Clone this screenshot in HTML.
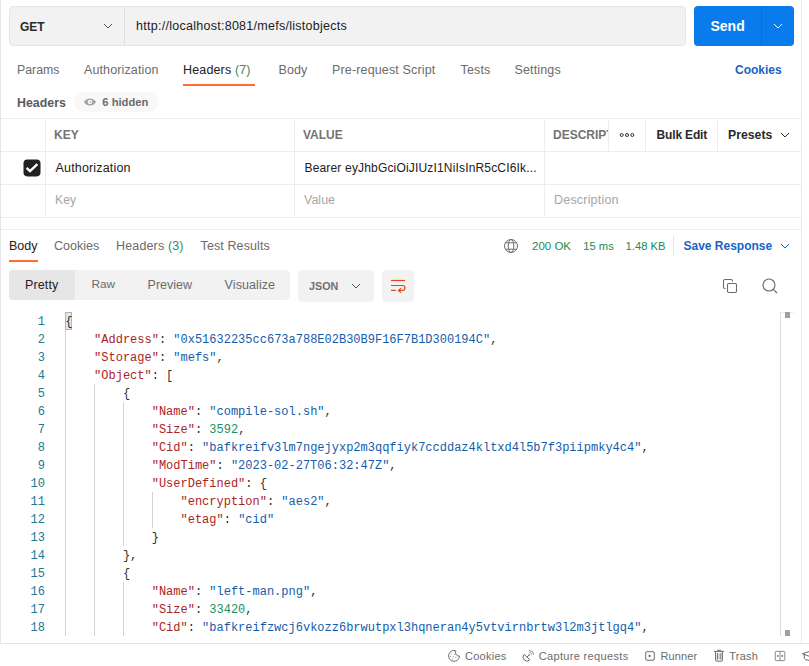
<!DOCTYPE html>
<html><head><meta charset="utf-8">
<style>
*{box-sizing:border-box;margin:0;padding:0}
html,body{width:809px;height:666px;overflow:hidden;background:#fff}
body{font-family:"Liberation Sans",sans-serif;font-size:12px;color:#212121;position:relative}
.abs{position:absolute}
.t{position:absolute;white-space:nowrap;line-height:1}
.urlbar{left:9px;top:6px;width:677px;height:40px;background:#f2f2f2;border:1px solid #e6e6e6;border-radius:4px}
.urlsep{left:124px;top:7px;width:1px;height:38px;background:#e0e0e0}
.send{left:694px;top:6px;width:100px;height:40px;background:#097bed;border-radius:4px}
.sendsep{left:761px;top:6px;width:1px;height:40px;background:#0a6dd2}
.hl{background:#ededed;height:1px;left:0;width:801px}
.vl{background:#ededed;width:1px}
.code{font-family:"Liberation Mono",monospace;font-size:12px;position:absolute;white-space:pre;line-height:18px}
.k{color:#ab2424}.s{color:#145dab}.n{color:#1a8f62}.p{color:#2e2e2e}
.ln{position:absolute;left:0;width:45px;text-align:right;font-family:"Liberation Mono",monospace;font-size:12px;color:#237893;line-height:18px}
.guide{position:absolute;width:1px;background:#d3d3d3}
</style></head><body>

<!-- URL bar -->
<div class="abs urlbar"></div>
<div class="abs urlsep"></div>
<div class="t" style="left:20px;top:21px;font-weight:bold;font-size:12px;color:#2a2a2a">GET</div>
<svg class="abs" style="left:103px;top:23px" width="10" height="6" viewBox="0 0 10 6"><path d="M1 1 L5 5 L9 1" fill="none" stroke="#555" stroke-width="1"/></svg>
<div class="t" style="left:136px;top:19.6px;font-size:12.5px;letter-spacing:0.27px;color:#212121">http://localhost:8081/mefs/listobjects</div>
<div class="abs send"></div>
<div class="abs sendsep"></div>
<div class="t" style="left:710.5px;top:19.4px;font-weight:bold;font-size:14px;color:#fff">Send</div>
<svg class="abs" style="left:773px;top:23px" width="10" height="6" viewBox="0 0 10 6"><path d="M1 1 L5 5 L9 1" fill="none" stroke="#fff" stroke-width="1"/></svg>

<!-- request tabs -->
<div class="t" style="left:17px;top:64px;font-size:12.3px;color:#6b6b6b">Params</div>
<div class="t" style="left:84px;top:64px;font-size:12.5px;letter-spacing:0.12px;color:#6b6b6b">Authorization</div>
<div class="t" style="left:183px;top:64px;font-size:12.5px;letter-spacing:0.15px;color:#212121">Headers <span style="color:#3a8a62">(7)</span></div>
<div class="abs" style="left:183px;top:84px;width:72px;height:2px;background:#ff6c37"></div>
<div class="t" style="left:278.5px;top:64px;font-size:12.5px;letter-spacing:0.1px;color:#6b6b6b">Body</div>
<div class="t" style="left:332px;top:64px;font-size:12.5px;letter-spacing:0.15px;color:#6b6b6b">Pre-request Script</div>
<div class="t" style="left:460.5px;top:64px;font-size:12.5px;letter-spacing:0.15px;color:#6b6b6b">Tests</div>
<div class="t" style="left:514.5px;top:64px;font-size:12.5px;letter-spacing:0.15px;color:#6b6b6b">Settings</div>
<div class="t" style="left:735px;top:64px;font-size:12px;font-weight:bold;color:#1a63c6">Cookies</div>

<!-- Headers label -->
<div class="t" style="left:17px;top:97px;font-size:12.4px;font-weight:bold;color:#5a5a5a">Headers</div>
<div class="abs" style="left:74px;top:92px;width:85px;height:20px;border-radius:10px;background:#f8f8f8"></div>
<svg class="abs" style="left:84px;top:98.2px" width="12" height="8" viewBox="0 0 12 8" overflow="visible"><path d="M0 4 C2.4 -0.7 9.6 -0.7 12 4 C9.6 8.7 2.4 8.7 0 4 Z" fill="#a3a3a3"/><circle cx="6" cy="4" r="2.3" fill="#f7f7f7"/><circle cx="6.2" cy="4" r="0.8" fill="#a3a3a3"/></svg>
<div class="t" style="left:102.3px;top:97.3px;font-size:11.2px;font-weight:bold;color:#6b6b6b">6 hidden</div>

<!-- table -->
<div class="abs hl" style="top:118px"></div>
<div class="abs hl" style="top:151px"></div>
<div class="abs hl" style="top:184px"></div>
<div class="abs hl" style="top:217px"></div>
<div class="abs vl" style="left:45px;top:118px;height:100px"></div>
<div class="abs vl" style="left:294px;top:118px;height:100px"></div>
<div class="abs vl" style="left:544px;top:118px;height:100px"></div>
<div class="abs vl" style="left:608px;top:118px;height:33px"></div>
<div class="abs vl" style="left:645px;top:118px;height:33px"></div>
<div class="abs vl" style="left:717px;top:118px;height:33px"></div>
<div class="t" style="left:54px;top:129px;font-size:12px;font-weight:bold;color:#747474">KEY</div>
<div class="t" style="left:303px;top:129px;font-size:12px;font-weight:bold;color:#747474">VALUE</div>
<div class="abs" style="left:553px;top:119px;width:55px;height:32px;overflow:hidden"><div class="t" style="left:0;top:10px;font-size:12px;font-weight:bold;color:#747474">DESCRIPTION</div></div>
<svg class="abs" style="left:618px;top:132px" width="18" height="6" viewBox="0 0 18 6"><g fill="none" stroke="#333" stroke-width="1"><circle cx="3.7" cy="3" r="1.5"/><circle cx="9" cy="3" r="1.5"/><circle cx="14.3" cy="3" r="1.5"/></g></svg>
<div class="t" style="left:656.5px;top:129px;font-size:12px;letter-spacing:-0.15px;font-weight:bold;color:#2a2a2a">Bulk Edit</div>
<div class="t" style="left:728px;top:129px;font-size:12.25px;font-weight:bold;color:#2a2a2a">Presets</div>
<svg class="abs" style="left:779.5px;top:132px" width="10" height="6" viewBox="0 0 10 6"><path d="M1 1 L5 5 L9 1" fill="none" stroke="#333" stroke-width="1"/></svg>

<svg class="abs" style="left:20px;top:156px" width="24" height="24" viewBox="0 0 24 24"><rect x="3.5" y="3.4" width="17" height="17" rx="3.8" fill="#212121"/><path d="M6.6 11.9 L10 15.1 L17.4 8.1" fill="none" stroke="#fff" stroke-width="2.4"/></svg>
<div class="t" style="left:55.5px;top:162px;font-size:12.5px;letter-spacing:0.17px;color:#212121">Authorization</div>
<div class="t" style="left:304.5px;top:162px;font-size:12px;letter-spacing:0.17px;color:#212121">Bearer eyJhbGciOiJIUzI1NiIsInR5cCI6Ik...</div>
<div class="t" style="left:55px;top:194px;font-size:12.2px;color:#a6a6a6">Key</div>
<div class="t" style="left:304px;top:194px;font-size:12.5px;color:#a6a6a6">Value</div>
<div class="t" style="left:554px;top:194px;font-size:12.5px;letter-spacing:0.2px;color:#a6a6a6">Description</div>

<div class="abs hl" style="top:229px"></div>

<!-- response tabs -->
<div class="t" style="left:9px;top:240px;font-size:12.5px;color:#212121">Body</div>
<div class="abs" style="left:9px;top:260px;width:29px;height:2px;background:#ff6c37"></div>
<div class="t" style="left:54px;top:240px;font-size:12.5px;color:#6b6b6b">Cookies</div>
<div class="t" style="left:116px;top:240px;font-size:12.5px;letter-spacing:0.15px;color:#6b6b6b">Headers <span style="color:#3a8a62">(3)</span></div>
<div class="t" style="left:200.6px;top:240px;font-size:12.5px;letter-spacing:0.1px;color:#6b6b6b">Test Results</div>

<svg class="abs" style="left:503px;top:238px" width="16" height="16" viewBox="0 0 16 16"><g fill="none" stroke="#6b6b6b" stroke-width="1"><circle cx="8" cy="8" r="6.5"/><ellipse cx="8" cy="8" rx="2.8" ry="6.5"/><path d="M2.5 4.8 H13.5 M2.5 11.2 H13.5"/></g></svg>
<div class="t" style="left:532px;top:240.5px;font-size:11.5px;color:#238a50">200 OK</div>
<div class="t" style="left:583.3px;top:240.5px;font-size:11.2px;color:#238a50">15 ms</div>
<div class="t" style="left:625.6px;top:240.5px;font-size:11.2px;color:#238a50">1.48 KB</div>
<div class="abs" style="left:673px;top:236px;width:1px;height:20px;background:#e6e6e6"></div>
<div class="t" style="left:683.5px;top:240px;font-size:12px;font-weight:bold;color:#1a63c6">Save Response</div>
<svg class="abs" style="left:779.7px;top:243px" width="10" height="6" viewBox="0 0 10 6"><path d="M1 1 L5 5 L9 1" fill="none" stroke="#1a63c6" stroke-width="1"/></svg>

<!-- view mode -->
<div class="abs" style="left:9px;top:270px;width:281px;height:30px;background:#f2f2f2;border-radius:4px"></div>
<div class="abs" style="left:9px;top:270px;width:66px;height:30px;background:#e6e6e6;border-radius:4px 0 0 4px"></div>
<div class="t" style="left:25px;top:279px;font-size:12.5px;letter-spacing:0.12px;color:#212121">Pretty</div>
<div class="t" style="left:91.5px;top:279px;font-size:11.8px;color:#6b6b6b">Raw</div>
<div class="t" style="left:147.6px;top:279px;font-size:12.5px;color:#6b6b6b">Preview</div>
<div class="t" style="left:224.6px;top:279px;font-size:12.5px;letter-spacing:0.08px;color:#6b6b6b">Visualize</div>
<div class="abs" style="left:298px;top:270px;width:76px;height:32px;background:#f2f2f2;border-radius:4px"></div>
<div class="t" style="left:309px;top:280.6px;font-size:10.8px;font-weight:bold;color:#707070">JSON</div>
<svg class="abs" style="left:351px;top:283px" width="10" height="6" viewBox="0 0 10 6"><path d="M1 1 L5 5 L9 1" fill="none" stroke="#555" stroke-width="1"/></svg>
<div class="abs" style="left:382px;top:270px;width:32px;height:32px;background:#f2f2f2;border-radius:4px"></div>
<svg class="abs" style="left:389px;top:279px" width="18" height="14" viewBox="0 0 18 14"><g fill="none" stroke="#dc4a1c" stroke-width="1.2"><path d="M2 1.5 H16"/><path d="M2 6.5 H13.5 A2.45 2.45 0 0 1 13.5 11.4 H9.6"/><path d="M12 9.2 L9.5 11.4 L12 13.7"/><path d="M2 11.4 H7"/></g></svg>

<svg class="abs" style="left:722px;top:278px" width="16" height="16" viewBox="0 0 16 16"><g fill="none" stroke="#6b6b6b" stroke-width="1.1"><rect x="5.5" y="5.5" width="9" height="9" rx="1.2"/><path d="M3.5 10.5 H3 A1.5 1.5 0 0 1 1.5 9 V3 A1.5 1.5 0 0 1 3 1.5 H9 A1.5 1.5 0 0 1 10.5 3 V3.5"/></g></svg>
<svg class="abs" style="left:761px;top:277px" width="18" height="18" viewBox="0 0 18 18"><g fill="none" stroke="#6b6b6b" stroke-width="1.1"><circle cx="8" cy="8" r="6"/><path d="M12.3 12.3 L16 16"/></g></svg>

<!-- code -->
<div class="abs" style="left:65px;top:312px;width:7px;height:18px;background:#e6e6e2;border:1px solid #b4b4b4"></div>
<div id="codewrap" class="abs" style="left:0;top:313px;width:780px;height:323px;overflow:hidden">
<div class="ln" style="top:0px">1</div>
<div class="code" style="left:65.3px;top:0px"><span class="p">{</span></div>
<div class="ln" style="top:18px">2</div>
<div class="code" style="left:94.1px;top:18px"><span class="k">"Address"</span><span class="p">: </span><span class="s">"0x51632235cc673a788E02B30B9F16F7B1D300194C"</span><span class="p">,</span></div>
<div class="ln" style="top:36px">3</div>
<div class="code" style="left:94.1px;top:36px"><span class="k">"Storage"</span><span class="p">: </span><span class="s">"mefs"</span><span class="p">,</span></div>
<div class="ln" style="top:54px">4</div>
<div class="code" style="left:94.1px;top:54px"><span class="k">"Object"</span><span class="p">: [</span></div>
<div class="ln" style="top:72px">5</div>
<div class="code" style="left:122.9px;top:72px"><span class="p">{</span></div>
<div class="ln" style="top:90px">6</div>
<div class="code" style="left:151.7px;top:90px"><span class="k">"Name"</span><span class="p">: </span><span class="s">"compile-sol.sh"</span><span class="p">,</span></div>
<div class="ln" style="top:108px">7</div>
<div class="code" style="left:151.7px;top:108px"><span class="k">"Size"</span><span class="p">: </span><span class="n">3592</span><span class="p">,</span></div>
<div class="ln" style="top:126px">8</div>
<div class="code" style="left:151.7px;top:126px"><span class="k">"Cid"</span><span class="p">: </span><span class="s">"bafkreifv3lm7ngejyxp2m3qqfiyk7ccddaz4kltxd4l5b7f3piipmky4c4"</span><span class="p">,</span></div>
<div class="ln" style="top:144px">9</div>
<div class="code" style="left:151.7px;top:144px"><span class="k">"ModTime"</span><span class="p">: </span><span class="s">"2023-02-27T06:32:47Z"</span><span class="p">,</span></div>
<div class="ln" style="top:162px">10</div>
<div class="code" style="left:151.7px;top:162px"><span class="k">"UserDefined"</span><span class="p">: {</span></div>
<div class="ln" style="top:180px">11</div>
<div class="code" style="left:180.5px;top:180px"><span class="k">"encryption"</span><span class="p">: </span><span class="s">"aes2"</span><span class="p">,</span></div>
<div class="ln" style="top:198px">12</div>
<div class="code" style="left:180.5px;top:198px"><span class="k">"etag"</span><span class="p">: </span><span class="s">"cid"</span></div>
<div class="ln" style="top:216px">13</div>
<div class="code" style="left:151.7px;top:216px"><span class="p">}</span></div>
<div class="ln" style="top:234px">14</div>
<div class="code" style="left:122.9px;top:234px"><span class="p">},</span></div>
<div class="ln" style="top:252px">15</div>
<div class="code" style="left:122.9px;top:252px"><span class="p">{</span></div>
<div class="ln" style="top:270px">16</div>
<div class="code" style="left:151.7px;top:270px"><span class="k">"Name"</span><span class="p">: </span><span class="s">"left-man.png"</span><span class="p">,</span></div>
<div class="ln" style="top:288px">17</div>
<div class="code" style="left:151.7px;top:288px"><span class="k">"Size"</span><span class="p">: </span><span class="n">33420</span><span class="p">,</span></div>
<div class="ln" style="top:306px">18</div>
<div class="code" style="left:151.7px;top:306px"><span class="k">"Cid"</span><span class="p">: </span><span class="s">"bafkreifzwcj6vkozz6brwutpxl3hqneran4y5vtvirnbrtw3l2m3jtlgq4"</span><span class="p">,</span></div>
<div class="guide" style="left:65px;top:17px;height:306px"></div>
<div class="guide" style="left:94px;top:71px;height:252px"></div>
<div class="guide" style="left:123px;top:89px;height:144px"></div>
<div class="guide" style="left:123px;top:269px;height:54px"></div>
<div class="guide" style="left:151.5px;top:179px;height:36px"></div>
</div>

<!-- scrollbar -->
<div class="abs" style="left:780px;top:312px;width:14px;height:1px;background:#efefef"></div>
<div class="abs" style="left:780px;top:312px;width:1px;height:324px;background:#dcdcdc"></div>
<div class="abs" style="left:785px;top:312px;width:5px;height:6px;background:#a0a0a0"></div>
<div class="abs" style="left:785px;top:630px;width:5px;height:6px;background:#a0a0a0"></div>

<!-- status bar -->
<div class="abs hl" style="top:643px;width:809px;background:#e6e6e6"></div>
<div class="abs" style="left:801px;top:0;width:1px;height:643px;background:#ebebeb"></div>
<div class="abs" style="left:0;top:0;width:1px;height:643px;background:#e6e6e6"></div>
<div class="t" style="left:465px;top:650.7px;font-size:11px;letter-spacing:0.27px;color:#6b6b6b">Cookies</div>
<div class="t" style="left:538.7px;top:650.7px;font-size:11px;letter-spacing:0.34px;color:#6b6b6b">Capture requests</div>
<div class="t" style="left:660.5px;top:650.7px;font-size:11px;letter-spacing:0.12px;color:#6b6b6b">Runner</div>
<div class="t" style="left:729.3px;top:650.7px;font-size:11px;letter-spacing:0.22px;color:#6b6b6b">Trash</div>

<!-- status icons -->
<svg class="abs" style="left:448px;top:650px" width="12" height="12" viewBox="0 0 12 12"><path d="M7.8 0.8 A5.4 5.4 0 1 0 11.4 6 A3.6 3.6 0 0 1 7.8 0.8 Z" fill="none" stroke="#6b6b6b" stroke-width="1"/><g fill="#8a8a8a"><circle cx="3.6" cy="4" r="0.55"/><circle cx="5.2" cy="6.6" r="0.55"/><circle cx="6.8" cy="4.4" r="0.55"/><circle cx="7.8" cy="7.6" r="0.55"/><circle cx="4.6" cy="9" r="0.55"/><circle cx="2.6" cy="6.6" r="0.5"/></g></svg>
<svg class="abs" style="left:521px;top:649px" width="14" height="14" viewBox="0 0 14 14"><g fill="none" stroke="#6b6b6b" stroke-width="1"><path d="M3.2 5.4 A3.9 3.9 0 0 0 8.9 10.8 Z"/><path d="M6 8.1 L7.8 6.3"/><path d="M8.4 3.4 A2.8 2.8 0 0 1 10.7 5.7" stroke="#8a8a8a"/><path d="M8.2 1.3 A5 5 0 0 1 12.8 5.6" stroke="#8a8a8a"/></g><circle cx="8" cy="6.1" r="0.8" fill="#6b6b6b"/></svg>
<svg class="abs" style="left:645px;top:651px" width="10" height="10" viewBox="0 0 10 10"><rect x="0.7" y="0.7" width="8.6" height="8.5" rx="1.2" fill="none" stroke="#6b6b6b" stroke-width="1"/><path d="M3.7 3.3 V6.6 L6.3 5 Z" fill="#6b6b6b"/></svg>
<svg class="abs" style="left:713px;top:649px" width="12" height="14" viewBox="0 0 12 14"><g fill="none" stroke="#6b6b6b" stroke-width="1"><path d="M1 2.4 H11.1"/><path d="M4.1 1.3 H8.1"/><path d="M2.6 2.6 V11 A1.2 1.2 0 0 0 3.8 12.2 H8.2 A1.2 1.2 0 0 0 9.4 11 V2.6"/><path d="M4.4 4.2 V10.6"/><path d="M7.8 4.2 V10.6"/></g><rect x="5.3" y="4.2" width="1.6" height="6.4" fill="#c8c8c8"/></svg>
<svg class="abs" style="left:774px;top:650px" width="12" height="12" viewBox="0 0 12 12"><g fill="none" stroke="#8a8a8a" stroke-width="1"><rect x="1.3" y="1.4" width="9.5" height="9.2" rx="0.8"/><path d="M6.1 1.4 V10.6"/></g><rect x="3.1" y="5.2" width="1.5" height="1.5" fill="#5a5a5a"/><rect x="7.6" y="5.2" width="1.5" height="1.5" fill="#5a5a5a"/></svg>
<svg class="abs" style="left:801px;top:650px" width="8" height="12" viewBox="0 0 8 12"><g fill="none" stroke="#6b6b6b" stroke-width="1"><path d="M8 1.6 L1.4 3.8 L8 6.2"/><path d="M3.3 5 V8.3 Q4 10.2 8 10.4"/></g></svg>
</body></html>
